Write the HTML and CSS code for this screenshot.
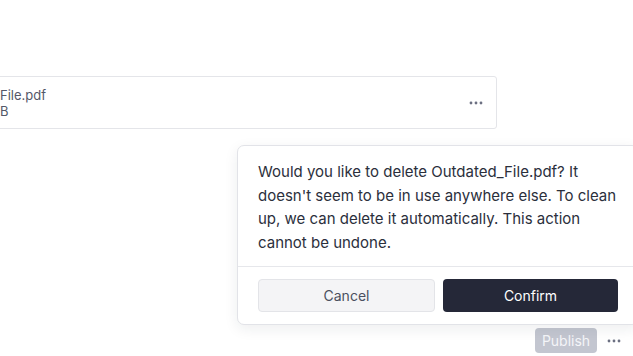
FILE: index.html
```html
<!DOCTYPE html>
<html lang="en">
<head>
<meta charset="utf-8">
<title>Delete file</title>
<link rel="stylesheet" href="styles.css">
</head>
<body>
<div class="page">
  <div class="file-card">
    <div class="file-info">
      <div class="file-name">File.pdf</div>
      <div class="file-size">B</div>
    </div>
    <button class="dots-btn" aria-label="More">
      <svg width="14" height="4" viewBox="0 0 14 4"><circle cx="2" cy="2" r="1.4"/><circle cx="7" cy="2" r="1.4"/><circle cx="12" cy="2" r="1.4"/></svg>
    </button>
  </div>

  <div class="toolbar">
    <button class="publish">Publish</button>
    <button class="dots-btn" aria-label="More">
      <svg width="14" height="4" viewBox="0 0 14 4"><circle cx="2" cy="2" r="1.4"/><circle cx="7" cy="2" r="1.4"/><circle cx="12" cy="2" r="1.4"/></svg>
    </button>
  </div>

  <div class="popover">
    <p class="popover-text">Would you like to delete Outdated_File.pdf? It doesn't seem to be in use anywhere else. To clean up, we can delete it automatically. This action cannot be undone.</p>
    <div class="popover-actions">
      <button class="btn btn-cancel">Cancel</button>
      <button class="btn btn-confirm">Confirm</button>
    </div>
  </div>
</div>
</body>
</html>
```

FILE: styles.css
```css
html, body {
  margin: 0;
  padding: 0;
  background: #ffffff;
}
body {
  font-family: Inter, "Noto Sans", sans-serif;
  color: #2a2e3b;
  overflow: hidden;
}
.page {
  position: relative;
  width: 633px;
  height: 356px;
  overflow: hidden;
  display: flex;
  flex-direction: column;
}
button {
  font-family: inherit;
  border: none;
  background: none;
  padding: 0;
  margin: 0;
  cursor: pointer;
}
.file-card {
  margin-top: 76px;
  margin-left: -13px;
  width: 510px;
  box-sizing: border-box;
  height: 53px;
  border: 1px solid #e4e5e9;
  border-radius: 3px;
  display: flex;
  align-items: center;
  justify-content: space-between;
  padding: 0 10px 0 12px;
}
.file-info {
  font-size: 13px;
  line-height: 16px;
  color: #545868;
  padding-top: 1px;
}
.dots-btn {
  display: flex;
  align-items: center;
  justify-content: center;
  width: 20px;
  height: 20px;
}
.dots-btn svg {
  fill: #6c7082;
}
.toolbar {
  margin-top: auto;
  margin-bottom: 3px;
  display: flex;
  justify-content: flex-end;
  align-items: center;
  gap: 7px;
  padding-right: 9px;
}
.publish {
  height: 25px;
  width: 62px;
  border-radius: 4px;
  background: #c3c6d0;
  color: #f4f5f8;
  font-size: 14px;
}
.popover {
  position: absolute;
  left: 237px;
  top: 145px;
  width: 402px;
  box-sizing: border-box;
  background: #ffffff;
  border: 1px solid #e2e3e8;
  border-radius: 7px;
  box-shadow: 0 4px 14px rgba(30, 34, 50, 0.08);
}
.popover-text {
  margin: 0;
  padding: 14px 20px 12px 20px;
  font-size: 15px;
  line-height: 23.5px;
  color: #2b2f3c;
  border-bottom: 1px solid #e6e7eb;
}
.popover-actions {
  display: flex;
  gap: 8px;
  padding: 12px 20px 12px 20px;
}
.btn {
  flex: 1;
  height: 33px;
  border-radius: 4px;
  font-size: 14px;
}
.btn-cancel {
  background: #f4f4f6;
  border: 1px solid #e3e4e8;
  color: #4b5060;
}
.btn-confirm {
  background: #252838;
  color: #ffffff;
  font-weight: 400;
}
```
